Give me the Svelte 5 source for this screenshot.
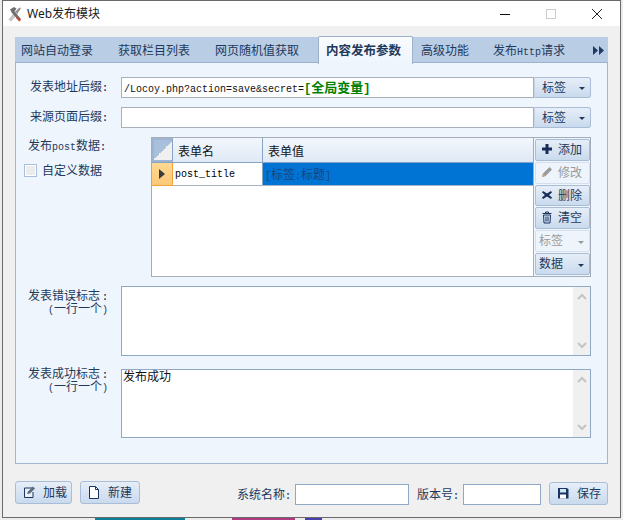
<script>
  const tabs = ['网站自动登录', '获取栏目列表', '网页随机值获取'];
</script>

<div class="page">
  <div class="window">
    <div class="titlebar">
      <svg class="appicon" width="16" height="16" viewBox="0 0 16 16">
        <path d="M2 13.500L9 5l2 2-7 8z" fill="#c9c9c9" stroke="#a5a5a5" stroke-width=".6"/>
        <path d="M3 3.500L7 1l2.500 1.500-2 3L14 13l-2 2L5 7z" fill="#6e6e6e"/>
        <path d="M8.500 5.500L12 2l2-.5L13 4 10 7.500z" fill="#8d8d8d"/>
        <path d="M10 10.500l4 3.500-1.500 1.500L9 12z" fill="#c6482e"/>
      </svg>
      <span class="title">Web发布模块</span>
      <div class="caps">
        <svg width="46" height="12" viewBox="0 0 12 12"><path d="M1 6.500h10" stroke="#111" stroke-width="1"/></svg>
        <svg width="46" height="12" viewBox="0 0 12 12"><rect x="1.500" y="1.500" width="9" height="9" fill="none" stroke="#ccc"/></svg>
        <svg width="46" height="12" viewBox="0 0 12 12"><path d="M1 1l10 10M11 1L1 11" stroke="#222" fill="none"/></svg>
      </div>
    </div>

    <div class="client">
      <div class="tabpanel">
        <div class="tabstrip">
          {#each tabs as t, i}
            <span class="tab" class:first={i === 0}>{t}</span>
          {/each}
          <span class="tab active">内容发布参数</span>
          <span class="tab after">高级功能</span>
          <span class="tab">发布<i class="m">Http</i>请求</span>
          <svg class="more" width="11" height="9" viewBox="0 0 11 9"><path d="M0 0l5 4.500L0 9zM6 0l5 4.500L6 9z" fill="#1f3a64"/></svg>
        </div>

        <div class="content">
          <div class="row r1">
            <label class="lab">发表地址后缀<b class="m">:</b></label>
            <div class="field">
              <span class="m dark">/Locoy.php?action=save&amp;secret=</span><b class="var"><span class="br">[</span>全局变量<span class="br">]</span></b>
            </div>
            <button class="btn drop">标签<span class="caret"></span></button>
          </div>
          <div class="row r2">
            <label class="lab">来源页面后缀<b class="m">:</b></label>
            <div class="field"></div>
            <button class="btn drop">标签<span class="caret"></span></button>
          </div>

          <div class="gridrow">
            <div class="side">
              <div class="postlabel">发布<span class="m">post</span>数据<b class="m">:</b></div>
              <div class="check"><span class="box"></span>自定义数据</div>
            </div>
            <div class="gridwrap">
              <div class="grid">
                <div class="ghead">
                  <div class="corner"></div>
                  <div class="gh c1">表单名</div>
                  <div class="gh c2">表单值</div>
                </div>
                <div class="grow">
                  <div class="rowind"><span class="tri"></span></div>
                  <div class="gc c1 m black">post_title</div>
                  <div class="gc c2 sel"><span class="m">[</span>标签<span class="m">:</span>标题<span class="m">]</span></div>
                </div>
              </div>
              <div class="tools">
                <button class="btn tool">
                  <svg width="14" height="14" viewBox="0 0 14 14"><path d="M5.500 2h3v3.500H12v3H8.500V12h-3V8.500H2v-3h3.500z" fill="#152d57"/></svg>
                  <span>添加</span>
                </button>
                <button class="btn tool off">
                  <svg width="14" height="14" viewBox="0 0 14 14"><path d="M2 12l1-3.500L9.500 2 12 4.500 5.500 11z" fill="#9a9a9a"/><path d="M2 12l1-3.500L5.500 11z" fill="#c9a878"/></svg>
                  <span>修改</span>
                </button>
                <button class="btn tool">
                  <svg width="14" height="14" viewBox="0 0 14 14"><path d="M3 3l4 2.500L11 3l1 1.500L9 7l3 2.500L11 11 7 8.500 3 11 2 9.500 5 7 2 4.500z" fill="#152d57"/></svg>
                  <span>删除</span>
                </button>
                <button class="btn tool">
                  <svg width="14" height="14" viewBox="0 0 14 14"><path d="M3.500 5h7l-.5 8H4z" fill="#cfe0f0" stroke="#1b3560"/><path d="M2.500 3.500h9M5.500 3.500V2h3v1.500M6 6.500v5M8 6.500v5" stroke="#1b3560" fill="none"/></svg>
                  <span>清空</span>
                </button>
                <button class="btn tool dd off">标签<span class="caret"></span></button>
                <button class="btn tool dd">数据<span class="caret"></span></button>
              </div>
            </div>
          </div>

          <div class="memorow m1">
            <div class="lab2">发表错误标志<b class="m">:</b><br /><span class="m">(</span>一行一个<span class="m">)</span></div>
            <div class="memo">
              <div class="memotext"></div>
              <div class="sb">
                <svg width="10" height="7" viewBox="0 0 10 7"><path d="M1 6l4-4 4 4" fill="none" stroke="#c4c4c4" stroke-width="2"/></svg>
                <svg width="10" height="7" viewBox="0 0 10 7"><path d="M1 1l4 4 4-4" fill="none" stroke="#c4c4c4" stroke-width="2"/></svg>
              </div>
            </div>
          </div>
          <div class="memorow m2">
            <div class="lab2">发表成功标志<b class="m">:</b><br /><span class="m">(</span>一行一个<span class="m">)</span></div>
            <div class="memo">
              <div class="memotext">发布成功</div>
              <div class="sb">
                <svg width="10" height="7" viewBox="0 0 10 7"><path d="M1 6l4-4 4 4" fill="none" stroke="#c4c4c4" stroke-width="2"/></svg>
                <svg width="10" height="7" viewBox="0 0 10 7"><path d="M1 1l4 4 4-4" fill="none" stroke="#c4c4c4" stroke-width="2"/></svg>
              </div>
            </div>
          </div>
        </div>
      </div>

      <div class="footer">
        <button class="btn foot load">
          <svg width="14" height="14" viewBox="0 0 14 14"><path d="M10 3H2.500v9.500H11V7" fill="#e8f0f8" stroke="#1b3560"/><path d="M5 9l1-2.500L11 1.500 13 3.500 8 8.500z" fill="#5a6a80"/></svg>
          <span>加载</span>
        </button>
        <button class="btn foot new">
          <svg width="14" height="14" viewBox="0 0 14 14"><path d="M2.500 1.500h6l3 3v9h-9z" fill="#fff" stroke="#1b3560"/><path d="M8.500 1.500v3h3" fill="none" stroke="#1b3560"/></svg>
          <span>新建</span>
        </button>
        <span class="spacer"></span>
        <span class="flab">系统名称<b class="m">:</b></span>
        <div class="finput name"></div>
        <span class="flab ver">版本号<b class="m">:</b></span>
        <div class="finput vers"></div>
        <button class="btn foot save">
          <svg width="14" height="14" viewBox="0 0 14 14"><path d="M2 2h9l1.500 1.500V12.500H2z" fill="#1b3560"/><path d="M4 3h6v3.500H4z" fill="#cfe6f7"/><path d="M4 8.500h6v4H4z" fill="#fff"/></svg>
          <span>保存</span>
        </button>
      </div>
    </div>
  </div>
  <div class="desktop">
    <span class="teal"></span><span class="mag"></span><span class="pur"></span>
  </div>
</div>

<style>
  :global(body) { margin: 0; background: #ececec; }
  .page {
    width: 623px; height: 520px; overflow: hidden; box-sizing: border-box; padding-left: 2px;
    font: 12px/16px "Noto Sans CJK SC", sans-serif; color: #1e395b;
    display: flex; flex-direction: column; background: #ececec;
  }
  .window {
    width: 619px; height: 518px; box-sizing: border-box; flex: none;
    border: 1px solid #6a6a6a; background: #f0f0f0;
    display: flex; flex-direction: column;
  }
  .titlebar { height: 25px; flex: none; background: #fff; display: flex; align-items: center; padding-left: 4px; }
  .appicon { margin-right: 4px; }
  .title { color: #1a1a1a; font-size: 12px; font-family: "Noto Sans", "Noto Sans CJK SC", sans-serif; }
  .caps { margin-left: auto; display: flex; }
  .client { flex: 1; display: flex; flex-direction: column; padding: 11px 12px 0 12px; }
  .tabpanel {
    height: 427px; flex: none; box-sizing: border-box; width: 593px;
    border: 1px solid #a3b6ce; background: #eef5fd; display: flex; flex-direction: column;
  }
  .tabstrip {
    height: 26px; flex: none; display: flex; align-items: stretch; background: #b9cde5;
    border-bottom: 1px solid #9db1cb; margin: -1px -1px 0 -1px; box-sizing: border-box;
  }
  .tab { padding: 0 12.5px; line-height: 25px; white-space: nowrap; }
  .tab.first { padding-left: 6px; }
  .tab.active {
    margin-left: 6.5px; padding: 0 7px; width: 79px; font-weight: 700; font-size: 12.5px;
    height: 27px;
    background: linear-gradient(#f9fbfe, #eef5fd); border: 1px solid #9db1cb; border-bottom: 0; border-radius: 2px 2px 0 0; margin-top: -1px;
  }
  .tab.after { padding-left: 8px; padding-right: 11.5px; }
  .more { margin: 9px 4px 0 auto; }
  .m { font-family: "Liberation Mono", monospace; font-size: 10px; font-style: normal; }
  .dark { color: #111; }
  .black { color: #000; }

  .content { flex: 1; display: flex; flex-direction: column; }
  .row { display: flex; height: 21px; }
  .r1 { margin-top: 14px; }
  .r2 { margin-top: 9px; }
  .lab { width: 92px; text-align: right; line-height: 18px; flex: none; white-space: nowrap; }
  .field {
    width: 413px; margin-left: 13px; box-sizing: border-box; background: #fff; border: 1px solid #aab0b8; flex: none;
    line-height: 17px; padding-left: 2px; white-space: nowrap;
  }
  .var { color: #008000; font-weight: 700; font-size: 13px; }
  .br { font-family: "Liberation Mono", monospace; font-size: 12px; }
  .btn {
    font: inherit; color: #1e395b; box-sizing: border-box; border: 1px solid #a9bdd6; border-radius: 2px;
    background: linear-gradient(#e6eef8, #c9daee); padding: 0 0 2px; display: flex; align-items: center;
  }
  .drop { width: 57px; height: 21px; padding-left: 7px; border-left-color: #c6d3e3; border-radius: 0 3px 3px 0; }
  .caret { width: 0; height: 0; border: 3px solid transparent; border-top: 3px solid #1e395b; border-bottom: 0; margin-left: auto; margin-right: 5px; margin-top: 4px; }

  .gridrow { display: flex; height: 140px; margin-top: 9px; }
  .side { width: 135px; flex: none; }
  .postlabel { margin-left: 12px; line-height: 15px; white-space: nowrap; }
  .check { display: flex; align-items: center; margin: 7px 0 0 8px; height: 16px; }
  .box { width: 11px; height: 11px; border: 1px solid #a9bfd9; background: #ececec; margin-right: 5px; box-shadow: inset 0 0 0 1px #fff; }
  .gridwrap { width: 440px; flex: none; display: flex; box-sizing: border-box; border: 1px solid #a4adb9; background: #fff; }
  .grid { flex: 1; }
  .ghead { display: flex; height: 25px; box-sizing: border-box; border-bottom: 1px solid #87a3c6; background: linear-gradient(#f3f7fd, #dfe9f5); }
  .corner {
    width: 21px; flex: none; box-sizing: border-box; border: 2px solid #9eb4d2; border-right: 1px solid #87a3c6;
    background: linear-gradient(135deg, #a9c0dc 50%, #f0f0f0 50%);
  }
  .gh { box-sizing: border-box; color: #111; line-height: 26px; padding-left: 5px; border-right: 1px solid #87a3c6; }
  .c1 { width: 90px; flex: none; }
  .c2 { flex: 1; border-right: 0; }
  .grow { display: flex; height: 23px; box-sizing: border-box; border-bottom: 1px solid #a8b4c4; }
  .rowind { width: 21px; flex: none; box-sizing: border-box; background: linear-gradient(#ffd993, #fcc87a); border-right: 1px solid #f2a33a; border-bottom: 1px solid #f2a33a; display: flex; align-items: center; justify-content: center; margin-bottom: -1px; }
  .tri { width: 0; height: 0; border-left: 6px solid #3c3c3c; border-top: 5px solid transparent; border-bottom: 5px solid transparent; }
  .gc { box-sizing: border-box; line-height: 22px; padding-left: 2px; border-right: 1px solid #87a3c6; white-space: nowrap; }
  .gc.m { line-height: 24px; }
  .sel { background: #0074d4; color: #17457e; border-right: 0; }
  .tools { width: 57px; flex: none; box-sizing: border-box; border-left: 1px solid #a4adb9; background: #eef5fd; padding: 1px 1px 0; display: flex; flex-direction: column; }
  .tool { width: 55px; height: 22px; margin: 0 0 1px; padding-left: 4px; gap: 4px; border-color: #a9bdd6; }
  .tool.off { background: #eef4fb; color: #9a9a9a; border-color: #d5e0ec; }
  .tool.dd { padding-left: 3px; gap: 0; }
  .tool.off .caret { border-top-color: #9a9a9a; }

  .memorow { display: flex; }
  .m1 { height: 70px; margin-top: 9px; }
  .m2 { height: 69px; margin-top: 13px; }
  .lab2 { width: 92px; flex: none; text-align: right; line-height: 13px; white-space: nowrap; padding-top: 2px; }
  .lab2 .m { line-height: 0; }
  .lab2 b { margin-left: 2px; }
  .m2 .lab2 { padding-top: 0; margin-top: -3px; }
  .memo { width: 470px; margin-left: 13px; box-sizing: border-box; border: 1px solid #8ea8c5; background: #fff; display: flex; flex: none; }
  .memotext { flex: 1; color: #111; line-height: 12px; padding: 0 1px; }
  .sb { width: 17px; flex: none; background: #f0f0f0; display: flex; flex-direction: column; justify-content: space-between; align-items: center; padding: 6px 0; box-sizing: border-box; }

  .footer { display: flex; align-items: flex-start; padding-top: 17px; height: 36px; }
  .foot { height: 23px; gap: 7px; padding-left: 6px; border-radius: 3px; }
  .load { width: 57px; }
  .new { width: 60px; margin-left: 8px; }
  .spacer { flex: 1; }
  .flab { line-height: 24px; margin-top: 1px; }
  .ver { margin-left: 8px; }
  .finput { height: 21px; box-sizing: border-box; border: 1px solid #8ea8c5; background: #fff; margin-left: 4px; margin-top: 3px; }
  .name { width: 114px; }
  .vers { width: 78px; margin-left: 4px; }
  .save { width: 59px; margin-left: 8px; margin-top: 1px; }

  .desktop { height: 2px; flex: none; display: flex; margin-left: -2px; }
  .teal { width: 90px; margin-left: 95px; background: #0d7f9a; }
  .mag { width: 63px; margin-left: 47px; background: #b03a80; }
  .pur { width: 17px; margin-left: 10px; background: #4a3fae; }
</style>
